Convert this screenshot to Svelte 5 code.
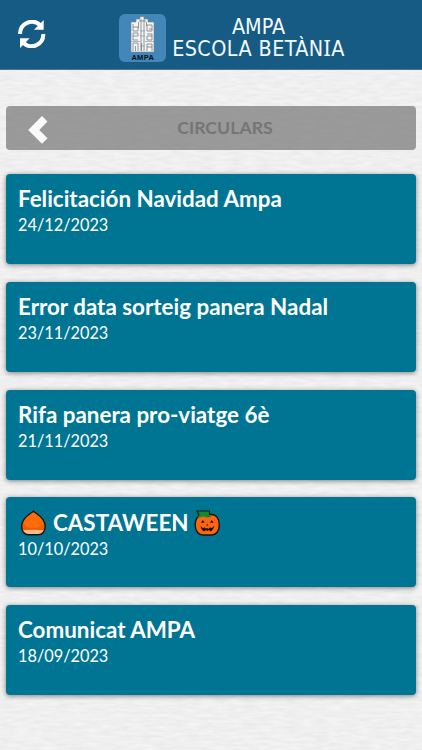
<script>
  const notices = [
    { title: 'Felicitación Navidad Ampa', date: '24/12/2023' },
    { title: 'Error data sorteig panera Nadal', date: '23/11/2023' },
    { title: 'Rifa panera pro-viatge 6è', date: '21/11/2023' },
    { title: 'CASTAWEEN', date: '10/10/2023', festive: true },
    { title: 'Comunicat AMPA', date: '18/09/2023' }
  ];
</script>

<div class="app">
  <svg class="paper" width="422" height="750" aria-hidden="true">
    <filter id="grain" x="0" y="0" width="100%" height="100%" color-interpolation-filters="sRGB">
      <feTurbulence type="fractalNoise" baseFrequency="0.07 0.34" numOctaves="2" seed="8" />
      <feColorMatrix values="0.065 0 0 0 0.906  0.065 0 0 0 0.906  0.065 0 0 0 0.906  0 0 0 0 1" />
    </filter>
    <rect width="422" height="750" filter="url(#grain)" />
  </svg>

  <header>
    <button class="refresh" aria-label="Actualitza">
      <svg width="28" height="28" viewBox="0 0 28 28">
        <path d="M2.1 14A11.8 11.8 0 0 1 22 5" fill="none" stroke="#fff" stroke-width="4" />
        <path d="M25.7 0V9.8H16Z" fill="#fff" />
        <path d="M25.3 14A11.8 11.8 0 0 1 5.5 23" fill="none" stroke="#fff" stroke-width="4" />
        <path d="M2 28V18.2H11.7Z" fill="#fff" />
      </svg>
    </button>
    <div class="logo">
      <svg width="25" height="37" viewBox="0 0 25 37">
        <path d="M1 6H6V3H10V.7H14V3H18V6H24V36H1Z" fill="#f2f4f5" stroke="#7e858a" stroke-width=".6" />
        <g fill="none" stroke="#777d81" stroke-width=".8">
          <path d="M11 3V35M14 3V35M8.5 6V12M16.5 6V10M9 5H16" />
          <path d="M3 8V15H8V11H3M3 17V24H8M3 20H8V17H3M3 35V27H8V35M5.5 30V35" />
          <path d="M17 15H22V9H17V15M22 13H19M17 18H22V24H17V20H22M17 35V28H22V35M17 31H22M11.5 27V35" />
          <path d="M1 25.5H10M15 25.5H24M10 15H15M10 20H15M10 30H15" stroke-width=".5" />
        </g>
      </svg>
      <span>AMPA</span>
    </div>
    <h1><span class="org">AMPA</span><span class="school">ESCOLA BETÀN<span class="serifed">I</span>A</span></h1>
  </header>

  <main>
    <div class="section">
      <button class="back" aria-label="Enrere">
        <svg width="20" height="28" viewBox="0 0 20 28">
          <path d="M14 0L19.5 5.5L11.2 14L19.5 22.3L14 27.7L.2 14Z" fill="#fafafa" />
        </svg>
      </button>
      <h2>CIRCULARS</h2>
    </div>

    {#each notices as notice}
      <article>
        <h3>
          {#if notice.festive}
            <svg class="chestnut" width="27" height="26" viewBox="0 0 27 26">
              <clipPath id="nut"><path d="M13.4 1.2C15.8 3.5 25.2 7.3 25.2 16.2C25.2 21.5 22 24.8 18.5 24.8H8.3C4.8 24.8 1.6 21.5 1.6 16.2C1.6 7.3 11 3.5 13.4 1.2Z" /></clipPath>
              <g clip-path="url(#nut)">
                <rect width="27" height="26" fill="#ed5b05" />
                <path d="M4 13C4 6 11 3 13.4 1C16 3 23 6 23 13Q22 18 13.4 18T4 13Z" fill="#ff6b08" />
                <path d="M1 20.2Q13.4 19.2 26 20.2V26H1Z" fill="#ffb78d" />
              </g>
              <path d="M13.4 1.2C15.8 3.5 25.2 7.3 25.2 16.2C25.2 21.5 22 24.8 18.5 24.8H8.3C4.8 24.8 1.6 21.5 1.6 16.2C1.6 7.3 11 3.5 13.4 1.2Z" fill="none" stroke="#141414" stroke-width="1.4" />
            </svg>
          {/if}
          <span>{notice.title}</span>
          {#if notice.festive}
            <svg class="pumpkin" width="27" height="26" viewBox="0 0 27 26">
              <path d="M8 4.5C3.5 6 1.2 10 1.2 15C1.2 21.5 5 25 9 25H17.8C22 25 25.3 21 25.3 15C25.3 9 22.5 4.5 17 4.5Z" fill="#ff6511" stroke="#141414" stroke-width="1.4" />
              <path d="M3 1H15.5V5.2C17.2 5.2 17.4 6.5 16 7.3L12 7.5L10 6.2L3.2 8.1L5 5.3Z" fill="#138b2c" />
              <path d="M5 5.3L3 1H15.5V5" fill="none" stroke="#141414" stroke-width="1.2" />
              <path d="M7 12.8L8.8 10L10.6 12.8ZM16 12.8L17.8 10L19.6 12.8ZM12.2 15.4L13.2 13.7L14.3 15.4Z" fill="#151515" />
              <path d="M6.5 16L9 18.2L10.6 17.2L12 18.8L13.3 17.9L14.6 18.8L16 17.2L17.5 18.2L20.2 16C19.6 19 18.3 20.7 16.3 21.6L15 20L13.3 21L11.6 20L10.3 21.6C8.3 20.7 7.1 19 6.5 16Z" fill="#151515" />
            </svg>
          {/if}
        </h3>
        <time>{notice.date}</time>
      </article>
    {/each}
  </main>
</div>

<style>
  :global(body) { margin: 0; }
  .app {
    position: relative;
    width: 422px;
    height: 750px;
    overflow: hidden;
    background: #efefef;
    font-family: Lato, sans-serif;
  }
  .paper { position: absolute; inset: 0; display: block; }
  header, main { position: relative; }
  header {
    display: flex;
    box-sizing: border-box;
    height: 70px;
    padding: 14px 0 0 18px;
    background: #165b83;
    border-bottom: 1px solid #487896;
  }
  button { display: block; padding: 0; border: 0; background: none; }
  svg { display: block; }
  .refresh { width: 28px; height: 28px; margin-top: 6px; }
  .logo {
    display: flex;
    flex-direction: column;
    align-items: center;
    box-sizing: border-box;
    width: 47.5px;
    height: 48px;
    margin-left: 72.5px;
    padding-top: 1.5px;
    border-radius: 6px;
    background: #4287b8;
  }
  .logo span {
    margin: 1px 0 0 1px;
    color: #07121b;
    font: bold 7.5px/7px "Liberation Sans", sans-serif;
    letter-spacing: .3px;
  }
  h1 {
    display: flex;
    flex-direction: column;
    align-items: center;
    width: 176px;
    margin: 2px 0 0 4.5px;
    color: #f3faff;
    font: 400 21.4px/22px "DejaVu Sans Condensed", "DejaVu Sans", sans-serif;
    font-stretch: condensed;
    white-space: nowrap;
  }
  .school { letter-spacing: .42px; }
  .serifed { font-family: "Noto Sans", sans-serif; font-stretch: normal; line-height: 0; }
  main { padding: 36px 6px 0; }
  .section {
    position: relative;
    display: flex;
    align-items: center;
    justify-content: center;
    height: 44px;
    margin-bottom: 24px;
    border-radius: 4px;
    background: rgba(105, 105, 105, .64);
  }
  .back { position: absolute; left: 22px; top: 10px; }
  h2 { margin: 0 0 0 28px; color: #757575; font-size: 17.7px; line-height: 24px; font-weight: 700; }
  article {
    box-sizing: border-box;
    height: 90px;
    margin-bottom: 17.75px;
    padding: 11.4px 12px 0;
    border-radius: 4px;
    background: #007593;
    color: #fff;
    box-shadow: 0 1px 5px rgba(0, 0, 0, .48);
  }
  h3 {
    display: flex;
    align-items: center;
    height: 28px;
    margin: 0;
    font-size: 22.4px;
    line-height: 28px;
    font-weight: 700;
    white-space: nowrap;
  }
  .chestnut { margin: 0 6px 0 2px; }
  .pumpkin { margin: 0 0 0 5px; }
  time { display: block; font-size: 16.3px; line-height: 24px; }
</style>
